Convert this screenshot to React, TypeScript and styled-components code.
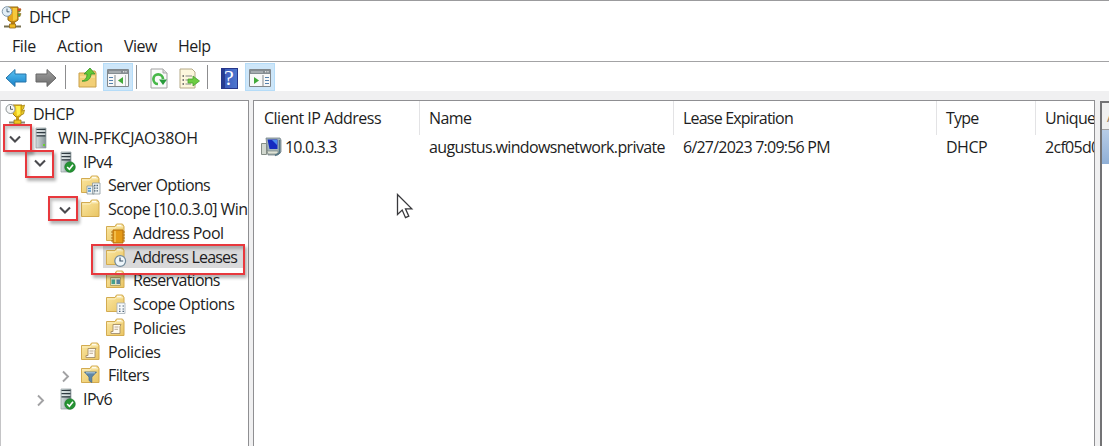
import React from 'react';
import styled, { createGlobalStyle } from 'styled-components';

const GlobalStyle = createGlobalStyle`
  * { box-sizing: border-box; }
  body { margin: 0; overflow: hidden; background: #f0f0f1; }
`;

const Window = styled.div`
  width: 1109px;
  height: 446px;
  display: flex;
  flex-direction: column;
  overflow: hidden;
  position: relative;
  border-top: 1px solid #9b9b9d;
  background: #f0f0f1;
  color: #1d1d22;
  font-family: 'Open Sans', 'Noto Sans', sans-serif;
  font-size: 16px;
  line-height: 20px;
`;

const Text = styled.span<{ $track?: number }>`
  white-space: nowrap;
  letter-spacing: ${(p) => p.$track ?? -0.5}px;
`;

const TitleBar = styled.header`
  height: 31px;
  flex: none;
  display: flex;
  align-items: center;
  gap: 6px;
  padding-left: 1px;
  background: #fff;
`;

const MenuBar = styled.nav`
  height: 29px;
  flex: none;
  display: flex;
  background: #fff;
  padding: 4px 0 0 12px;
`;

const MenuItem = styled.span<{ $width: number }>`
  width: ${(p) => p.$width}px;
`;

const ToolBar = styled.div`
  height: 30px;
  flex: none;
  display: flex;
  align-items: center;
  background: #fff;
  border-top: 1px solid #a3a3a5;
  padding-left: 1px;
`;

const ToolButton = styled.div<{ $active?: boolean; $width?: number }>`
  width: ${(p) => p.$width ?? 30}px;
  height: 28px;
  display: flex;
  align-items: center;
  justify-content: center;
  padding-top: 3px;
  border: 1px solid ${(p) => (p.$active ? '#b5dcf8' : 'transparent')};
  background: ${(p) => (p.$active ? '#cde6f9' : 'transparent')};
`;

const ToolDivider = styled.div<{ $before?: number; $after?: number }>`
  width: 1px;
  height: 24px;
  margin: 0 ${(p) => p.$after ?? 0}px 0 ${(p) => p.$before ?? 0}px;
  background: #8d8d8f;
`;

const Panes = styled.main`
  flex: 1;
  min-height: 0;
  display: flex;
  padding-top: 9px;
`;

const TreePane = styled.aside`
  width: 249px;
  flex: none;
  overflow: hidden;
  background: #fff;
  border: solid #8f8f92;
  border-width: 1px 1px 0 0;
  border-left: 1px solid #c4c4c6;
  padding-top: 1.2px;
`;

const TreeRow = styled.div<{ $level: number }>`
  height: 23.75px;
  display: flex;
  align-items: center;
  padding-left: ${(p) => (p.$level ? 25 * (p.$level - 1) + 4 : 4)}px;
`;

const Expander = styled.span`
  width: 20px;
  height: 20px;
  margin-right: 5px;
  flex: none;
`;

const NodeIcon = styled.span`
  position: relative;
  z-index: 1;
  width: 22px;
  height: 22px;
  flex: none;
`;

const NodeLabel = styled.span<{ $selected?: boolean }>`
  height: 23px;
  flex: ${(p) => (p.$selected ? '1' : 'none')};
  display: flex;
  align-items: center;
  padding-left: 6px;
  margin-right: ${(p) => (p.$selected ? 4 : 0)}px;
  background: ${(p) => (p.$selected ? '#d9d9da' : 'transparent')};
  box-shadow: ${(p) => (p.$selected ? '-24px 0 0 #d9d9da' : 'none')};
`;

const ListPane = styled.section`
  width: 842px;
  flex: none;
  margin-left: 4px;
  background: #fff;
  overflow: hidden;
  border: solid #8f8f92;
  border-width: 1px 1px 0 1px;
`;

const ListRow = styled.div<{ $height: number }>`
  height: ${(p) => p.$height}px;
  display: flex;
`;

const Cell = styled.div<{ $width: number; $inset: number; $head?: boolean }>`
  width: ${(p) => p.$width}px;
  flex: none;
  display: flex;
  align-items: center;
  gap: 3px;
  padding-left: ${(p) => p.$inset}px;
  border-right: 1px solid ${(p) => (p.$head ? '#e3e3e5' : 'transparent')};
`;

const ActionsPane = styled.aside`
  flex: 1;
  margin: 1px 0 0 5px;
  overflow: hidden;
  background: #fff;
  border: solid #737375;
  border-width: 2px 0 0 2px;
`;

const ActionsHead = styled.div`
  height: 27px;
  padding: 3px 0 0 5px;
  background: #f0f0f0;
  border-bottom: 1px solid #a0a0a2;
  color: #9a8468;
`;

const ActionsGroup = styled.div`
  height: 34px;
  background: linear-gradient(#b7cce6, #8fafd6);
`;

const Highlight = styled.div<{ $x: number; $y: number; $w: number; $h: number }>`
  position: absolute;
  z-index: 2;
  left: ${(p) => p.$x}px;
  top: ${(p) => p.$y - 1}px;
  width: ${(p) => p.$w}px;
  height: ${(p) => p.$h}px;
  border: 2px solid #e8383d;
  box-shadow: 2px 3px 3px rgba(0, 0, 0, 0.3), inset 2px 3px 3px rgba(0, 0, 0, 0.22);
`;

const Pointer = styled.svg`
  position: absolute;
  left: 396px;
  top: 192px;
`;

const Trophy = () => (
  <svg width="22" height="24" viewBox="0 0 22 24">
    <path d="M7 2h10v13l-3 2h-4l-3-2z" fill="#e5a51d" stroke="#8e6710" />
    <path d="M12 3h4v11l-4 2z" fill="#f5c93c" />
    <path d="M17 4h3l-1 3h-2zm0 4.5h3l-1 3h-2z" fill="#46a24b" stroke="#a46b16" strokeWidth=".6" />
    <path d="M17 3.5h3l-1 2.5h-2z" fill="#d2492a" />
    <path d="M10 17h4v2h-4z" fill="#b87d12" />
    <path d="M3 21.5h17" stroke="#77704f" strokeWidth="2" />
    <path d="M8.5 19h6v4h-6z" fill="#eeb91f" stroke="#94691a" strokeWidth=".8" />
    <circle cx="6" cy="6.5" r="4.8" fill="#e3eef5" stroke="#8298aa" />
    <path d="M6 3.5v3.3h2.5" fill="none" stroke="#4c657a" />
  </svg>
);

const TreeTrophy = () => (
  <svg width="22" height="22" viewBox="0 0 22 22">
    <path d="M8 2h9v9l-2.5 3h-3.5l-3-3z" fill="#edc51c" stroke="#a17a0e" />
    <path d="M11 3h4v8l-3 2z" fill="#fff04c" />
    <path d="M17 3l2.5-1-1 4-1.5 1m0 1l2.5-1-1 4-2.5 1" fill="#e5c82b" stroke="#a88712" strokeWidth=".8" />
    <path d="M11 14h3v3h-3z" fill="#c89812" />
    <path d="M4 19.5h16" stroke="#8b8877" strokeWidth="2" />
    <path d="M9 17h7v4H9z" fill="#efc321" stroke="#9d7a18" strokeWidth=".8" />
    <circle cx="5.5" cy="6" r="4.5" fill="#f5f6f6" stroke="#8d9496" />
    <path d="M5.5 3v3.3H8" fill="none" stroke="#596266" />
  </svg>
);

const Server = ({ ok }: { ok?: boolean }) => (
  <svg width="22" height="22" viewBox="0 0 22 22">
    <defs>
      <linearGradient id="tower">
        <stop offset="0" stopColor="#d5dedf" />
        <stop offset="1" stopColor="#839194" />
      </linearGradient>
    </defs>
    <path d="M6 1h10v20H6z" fill="url(#tower)" stroke="#919b9e" strokeWidth=".7" />
    <path d="M6.5 2.5h9m-9 3.2h9m-9 3.2h9" stroke="#303b42" strokeWidth="1.2" />
    <path d="M7 4h8m-8 3.2h8" stroke="#eff4f5" />
    {ok ? (
      <>
        <circle cx="15" cy="16" r="5.3" fill="#259332" stroke="#17752a" strokeWidth=".6" />
        <path d="M12.2 16l2.2 2.3 3.6-4.5" fill="none" stroke="#fff" strokeWidth="1.6" />
      </>
    ) : (
      <path d="M13 18h2" stroke="#6bd02e" strokeWidth="2" />
    )}
  </svg>
);

type Badge = 'sheet' | 'pool' | 'clock' | 'reserve' | 'options' | 'policy' | 'filter';

const Folder = ({ badge }: { badge?: Badge }) => (
  <svg width="22" height="22" viewBox="0 0 22 22">
    <defs>
      <linearGradient id="folder" x2="1" y2="1">
        <stop offset="0" stopColor="#fbe7a2" />
        <stop offset="1" stopColor="#e9c564" />
      </linearGradient>
    </defs>
    <path d="M1.5 4.5H10L11.5 2h6L19 4.5v14H1.5z" fill="url(#folder)" stroke="#d3ab50" />
    <path d="M12 3.5h4.5" stroke="#fffbed" strokeWidth="1.5" />
    <path d="M2 6h8l1.5-1.2H18" fill="none" stroke="#fbf0c4" />
    {badge === 'sheet' && (
      <>
        <path d="M7 12h7v8H7zM12.5 9H20v11h-7.5z" fill="#f0f5f6" stroke="#8b989e" strokeWidth=".8" />
        <path d="M8 14.5h3m-3 2.5h3" stroke="#478ec8" strokeWidth="1.5" />
        <path d="M14 11.5h4.5m-4.5 2.7h4.5m-4.5 2.7h4.5" stroke="#526778" strokeDasharray="1.5 1" strokeWidth="1.3" />
      </>
    )}
    {badge === 'pool' && (
      <>
        <path d="M6 10h14M6 13h14M6 16h14M6 19h14" stroke="#b27719" strokeWidth="1.2" />
        <path d="M8 8h10v13H8z" fill="#e59a16" stroke="#b76f0c" />
        <path d="M10 9v11" stroke="#f6c75a" strokeWidth="1.5" />
      </>
    )}
    {badge === 'clock' && (
      <>
        <circle cx="15.2" cy="15" r="5.4" fill="#eef6fb" stroke="#71899a" strokeWidth="1.2" />
        <path d="M15 11.5V15h3.2" fill="none" stroke="#384f64" strokeWidth="1.2" />
      </>
    )}
    {badge === 'reserve' && (
      <>
        <path d="M5.5 8.5h10v8h-10z" fill="#dfe3c4" stroke="#b5a566" />
        <path d="M6.5 10.5h3.5v4.5H6.5z" fill="#44a08c" />
        <path d="M11.5 10.5H15v4.5h-3.5z" fill="#5581a0" />
      </>
    )}
    {badge === 'options' && (
      <>
        <path d="M12 10h8v10.5h-8z" fill="#f7f9fa" stroke="#a5afb6" strokeWidth=".8" />
        <path d="M14 13h1.5m2 0H19m-5 3h1.5m2 0H19m-5 2.4h1.5m2 0H19" stroke="#51677b" strokeWidth="1.2" />
      </>
    )}
    {badge === 'policy' && (
      <>
        <path d="M8 7.5h8l-1 2v7H6v-2h2z" fill="#fffaf0" stroke="#a58d62" strokeWidth=".9" />
        <path d="M9.5 10h4m-4 2.3h3.5M6 16.5h8" stroke="#aa987c" strokeWidth=".8" />
      </>
    )}
    {badge === 'filter' && (
      <>
        <path d="M4.5 8h12l-4.7 5v5.5L9 16.5V13z" fill="#5f87a8" stroke="#466c8e" strokeWidth=".8" />
        <path d="M6 8.8h9" stroke="#b5d0e2" />
      </>
    )}
  </svg>
);

const Chevron = ({ open }: { open: boolean }) => (
  <svg width="20" height="20" viewBox="0 0 20 20" fill="none">
    {open ? (
      <path d="M5 8.5l5 5 5-5" stroke="#4a4a4e" strokeWidth="2.1" />
    ) : (
      <path d="M8 6.5l5 5-5 5" stroke="#a2a2a4" strokeWidth="1.9" />
    )}
  </svg>
);

const Arrow = ({ back }: { back?: boolean }) => (
  <svg width="22" height="20" viewBox="0 0 22 20">
    <defs>
      <linearGradient id={back ? 'blueArrow' : 'greyArrow'} x2="0" y2="1">
        <stop offset="0" stopColor={back ? '#5cc4f3' : '#a0a0a0'} />
        <stop offset="1" stopColor={back ? '#1780c9' : '#6c6c6c'} />
      </linearGradient>
    </defs>
    <path
      d={back ? 'M1 10l9-8.5V6h11v8H10v4.5z' : 'M21 10l-9-8.5V6H1v8h11v4.5z'}
      fill={back ? 'url(#blueArrow)' : 'url(#greyArrow)'}
      stroke={back ? '#2674a9' : '#666'}
    />
  </svg>
);

const UpFolder = () => (
  <svg width="20" height="22" viewBox="0 0 20 22">
    <path d="M1 6h7l2-2h7l1 2v14H1z" fill="#f2cf76" stroke="#c9a04a" />
    <path d="M2 10h15" stroke="#fbe8ac" />
    <path d="M4 14c4-1 5-4 5-7H6l6-6 5 6h-4c0 5-4 8-9 7z" fill="#62c936" stroke="#36922b" strokeWidth=".8" />
  </svg>
);

const PaneIcon = ({ right }: { right?: boolean }) => (
  <svg width="22" height="18" viewBox="0 0 22 18">
    <path d="M.5.5h21v17H.5z" fill="#f8f8f8" stroke="#81878b" />
    <path d="M1 1h20v4H1z" fill="#858c91" />
    <path d="M2 3h12" stroke="#c6cbce" />
    <path d="M16 2.8h4" stroke="#fff" strokeDasharray="1 .7" />
    <path d={right ? 'M14 6v11' : 'M8 6v11'} stroke="#858b8f" />
    <path d={right ? 'M16 8.5h4m-4 3h4m-4 3h4' : 'M2 8.5h4m-4 3h4m-4 3h4'} stroke="#5481ae" strokeWidth="1.2" />
    <path d={right ? 'M5 8v7l5-3.5z' : 'M16 8v7l-5-3.5z'} fill="#41a938" />
    {!right && <path d="M18.5 6v11" stroke="#b9bec0" />}
  </svg>
);

const Refresh = () => (
  <svg width="18" height="21" viewBox="0 0 18 21">
    <path d="M1 1h12l4 4v15H1z" fill="#fafafa" stroke="#a1a1a1" />
    <path d="M13 1v4h4" fill="#ddd" stroke="#aaa" />
    <path d="M8 16a4.8 4.8 0 1 1 5-5" fill="none" stroke="#48b749" strokeWidth="2.7" />
    <path d="M9 11.5h8L13 17z" fill="#299b3c" />
  </svg>
);

const ExportList = () => (
  <svg width="21" height="21" viewBox="0 0 21 21">
    <path d="M1 1h12l3 3v16H1z" fill="#fdf7dd" stroke="#b5aa88" />
    <path d="M3.5 8H5m-1.5 4H5m-1.5 4H5" stroke="#555" strokeWidth="1.5" />
    <path d="M6.5 8H13m-6.5 4H10m-3.5 4H12" stroke="#888" />
    <path d="M9 11h5V8l6.5 5-6.5 5v-3H9z" fill="#6dcd42" stroke="#46a130" strokeWidth=".8" />
  </svg>
);

const HelpBook = styled.span`
  width: 17px;
  height: 21px;
  display: flex;
  align-items: center;
  justify-content: center;
  color: #fff;
  background: linear-gradient(90deg, #263c91 0 3px, #3c5cbd 3px, #4e77cf);
  border: 1px solid #27378b;
  font: 22px/20px 'Liberation Serif', serif;
`;

const ClientComputer = () => (
  <svg width="21" height="20" viewBox="0 0 21 20">
    <path d="M.5 6.5h5v11h-5z" fill="#d2d8cf" stroke="#858e86" />
    <path d="M5 1h14l1 2v12l-3 3H7z" fill="#a3b6bb" stroke="#738086" strokeWidth=".8" />
    <path d="M6.5 2.5h10v9.5h-8z" fill="#142bc0" />
    <path d="M11 3h5v5z" fill="#4a8bed" />
    <path d="M6 14h11v3H7z" fill="#dee3d7" stroke="#7b857f" strokeWidth=".7" />
    <path d="M18.5 3v13L14 18.5" fill="none" stroke="#547684" strokeWidth="1.5" />
  </svg>
);

type Node = {
  label: string;
  level: number;
  icon: React.ReactNode;
  open?: boolean;
  selected?: boolean;
  track?: number;
};

const nodes: Node[] = [
  { label: 'DHCP', level: 0, icon: <TreeTrophy /> },
  { label: 'WIN-PFKCJAO38OH', level: 1, icon: <Server />, open: true, track: -0.25 },
  { label: 'IPv4', level: 2, icon: <Server ok />, open: true },
  { label: 'Server Options', level: 3, icon: <Folder badge="sheet" />, track: -0.64 },
  { label: 'Scope [10.0.3.0] Win', level: 3, icon: <Folder />, open: true, track: -0.55 },
  { label: 'Address Pool', level: 4, icon: <Folder badge="pool" />, track: -0.6 },
  { label: 'Address Leases', level: 4, icon: <Folder badge="clock" />, selected: true, track: -0.78 },
  { label: 'Reservations', level: 4, icon: <Folder badge="reserve" />, track: -0.75 },
  { label: 'Scope Options', level: 4, icon: <Folder badge="options" />, track: -0.52 },
  { label: 'Policies', level: 4, icon: <Folder badge="policy" />, track: -0.4 },
  { label: 'Policies', level: 3, icon: <Folder badge="policy" />, track: -0.4 },
  { label: 'Filters', level: 3, icon: <Folder badge="filter" />, open: false, track: -0.6 },
  { label: 'IPv6', level: 2, icon: <Server ok />, open: false },
];

const columns = [
  { title: 'Client IP Address', value: '10.0.3.3', width: 166, titleTrack: -0.5, track: -0.85 },
  { title: 'Name', value: 'augustus.windowsnetwork.private', width: 254, titleTrack: -0.6, track: -0.63 },
  { title: 'Lease Expiration', value: '6/27/2023 7:09:56 PM', width: 263, titleTrack: -0.8, track: -0.77 },
  { title: 'Type', value: 'DHCP', width: 99, titleTrack: -0.8, track: -0.5 },
  { title: 'Unique', value: '2cf05d0', width: 100, titleTrack: -0.6, track: -0.7 },
];

export default function App() {
  return (
    <Window>
      <GlobalStyle />
      <TitleBar>
        <Trophy />
        <Text>DHCP</Text>
      </TitleBar>
      <MenuBar>
        <MenuItem $width={45}><Text $track={-0.4}>File</Text></MenuItem>
        <MenuItem $width={67}><Text $track={-0.2}>Action</Text></MenuItem>
        <MenuItem $width={54}><Text>View</Text></MenuItem>
        <MenuItem $width={50}><Text>Help</Text></MenuItem>
      </MenuBar>
      <ToolBar>
        <ToolButton><Arrow back /></ToolButton>
        <ToolButton><Arrow /></ToolButton>
        <ToolDivider $before={4} $after={7} />
        <ToolButton><UpFolder /></ToolButton>
        <ToolButton $active><PaneIcon /></ToolButton>
        <ToolDivider $before={3} $after={7} />
        <ToolButton><Refresh /></ToolButton>
        <ToolButton><ExportList /></ToolButton>
        <ToolDivider $before={3} $after={5} />
        <ToolButton $width={32}><HelpBook>?</HelpBook></ToolButton>
        <ToolButton $active><PaneIcon right /></ToolButton>
      </ToolBar>
      <Panes>
        <TreePane>
          {nodes.map((n, i) => (
            <TreeRow key={i} $level={n.level}>
              {n.level > 0 && <Expander>{n.open !== undefined && <Chevron open={n.open} />}</Expander>}
              <NodeIcon>{n.icon}</NodeIcon>
              <NodeLabel $selected={n.selected}><Text $track={n.track}>{n.label}</Text></NodeLabel>
            </TreeRow>
          ))}
        </TreePane>
        <ListPane>
          <ListRow $height={34}>
            {columns.map((c, i) => (
              <Cell key={c.title} $width={c.width} $inset={i === 0 ? 10 : 9} $head>
                <Text $track={c.titleTrack}>{c.title}</Text>
              </Cell>
            ))}
          </ListRow>
          <ListRow $height={24}>
            {columns.map((c, i) => (
              <Cell key={c.title} $width={c.width} $inset={i === 0 ? 7 : 9}>
                {i === 0 && <ClientComputer />}
                <Text $track={c.track}>{c.value}</Text>
              </Cell>
            ))}
          </ListRow>
        </ListPane>
        <ActionsPane>
          <ActionsHead>A</ActionsHead>
          <ActionsGroup />
        </ActionsPane>
      </Panes>
      <Highlight $x={3} $y={124} $w={29} $h={28} />
      <Highlight $x={25} $y={150} $w={29} $h={28} />
      <Highlight $x={48} $y={196} $w={30} $h={25} />
      <Highlight $x={91} $y={244} $w={154} $h={31} />
      <Pointer width="18" height="27" viewBox="0 0 18 27">
        <path d="M1.5 1.5v20l4.7-4.4 3.3 7.6 3.3-1.5-3.3-7.4h6.3z" fill="#fff" stroke="#39393c" strokeWidth="1.3" />
      </Pointer>
    </Window>
  );
}
